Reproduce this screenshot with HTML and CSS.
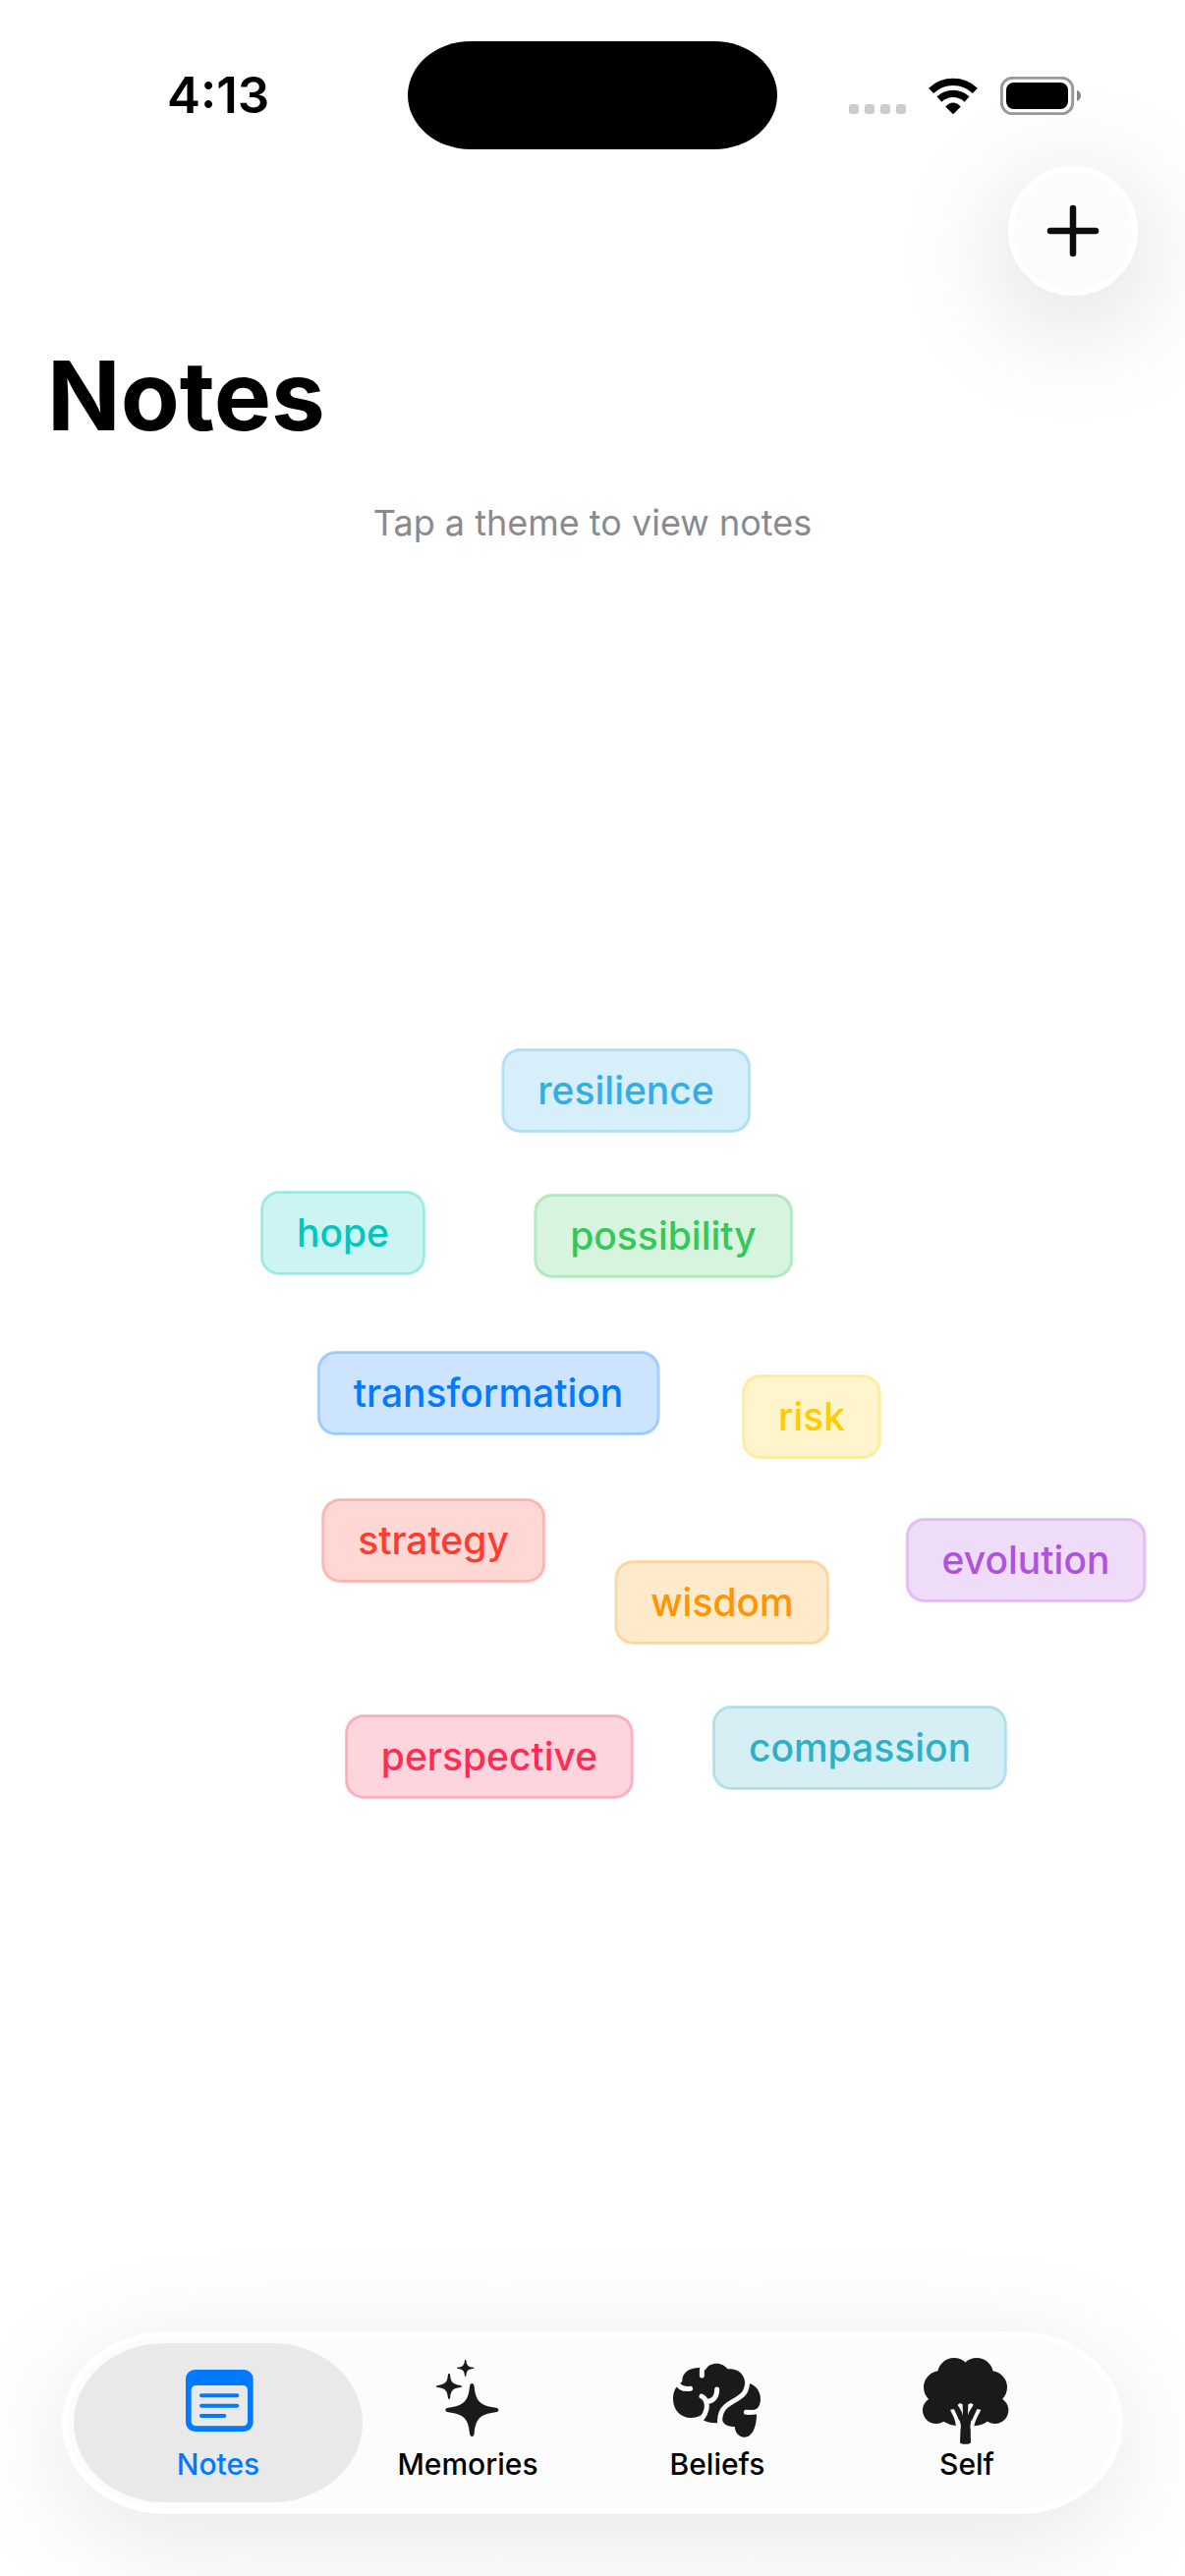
FILE: index.html
```html
<!DOCTYPE html>
<html lang="en">
<head>
  <meta charset="utf-8">
  <meta name="viewport" content="width=device-width, initial-scale=1">
  <title>Notes</title>
  <link rel="stylesheet" href="styles.css">
</head>
<body>
  <div class="screen">
    <div class="status">
      <time class="status-time">4:13</time>
      <div class="island"></div>
      <div class="status-icons">
        <div class="signal"><i></i><i></i><i></i><i></i></div>
        <svg class="wifi" viewBox="496 147 151 111" aria-hidden="true">
          <g fill="none" stroke="#000" stroke-width="22">
            <path d="M504 187A98 98 0 0 1 639 187"/>
            <path d="M529 213A62 62 0 0 1 614 213"/>
          </g>
          <path d="M548 236Q571 211 595 236L575 256Q571 260 568 256Z"/>
        </svg>
        <svg class="battery" viewBox="714 144 246 117" aria-hidden="true">
          <rect x="718" y="148" width="217" height="109" rx="33" fill="none" stroke="#999" stroke-width="9"/>
          <rect x="732" y="162" width="189" height="81" rx="23"/>
          <path d="M948 185Q960 190 960 202Q960 214 948 219Z" fill="#888"/>
        </svg>
      </div>
    </div>

    <header class="toolbar">
      <button class="add" type="button" aria-label="Add note">
        <svg viewBox="0 0 54 54" aria-hidden="true"><path d="M27 4V50M4 27H50" fill="none" stroke="#0c0c0c" stroke-width="6.5" stroke-linecap="round"/></svg>
      </button>
    </header>

    <h1 class="title">Notes</h1>
    <p class="hint">Tap a theme to view notes</p>

    <main class="cloud">
      <button type="button" class="theme cyan" style="--x:34px;--y:-354px">resilience</button>
      <button type="button" class="theme mint" style="--x:-254px;--y:-209px">hope</button>
      <button type="button" class="theme green" style="--x:72px;--y:-206px">possibility</button>
      <button type="button" class="theme blue" style="--x:-106px;--y:-46px">transformation</button>
      <button type="button" class="theme yellow" style="--x:223px;--y:-22px">risk</button>
      <button type="button" class="theme red" style="--x:-162px;--y:104px">strategy</button>
      <button type="button" class="theme orange" style="--x:132px;--y:167px">wisdom</button>
      <button type="button" class="theme purple" style="--x:441px;--y:124px">evolution</button>
      <button type="button" class="theme teal" style="--x:272px;--y:315px">compassion</button>
      <button type="button" class="theme pink" style="--x:-105px;--y:324px">perspective</button>
    </main>

    <nav class="tabs">
      <a class="tab active" href="#notes" aria-current="page">
        <svg viewBox="381 150 270 270" aria-hidden="true">
          <path fill-rule="evenodd" d="M445 186H595A28 28 0 0 1 623 214V347A28 28 0 0 1 595 375H445A28 28 0 0 1 417 347V214A28 28 0 0 1 445 186ZM448 234A14 14 0 0 0 434 248V344A14 14 0 0 0 448 358H592A14 14 0 0 0 606 344V248A14 14 0 0 0 592 234Z"/>
          <path d="M465 265H574M465 296H574M465 327H535" fill="none" stroke="currentColor" stroke-width="12" stroke-linecap="round"/>
        </svg>
        <span>Notes</span>
      </a>
      <a class="tab" href="#memories">
        <svg viewBox="153 150 270 270" aria-hidden="true">
          <defs><path id="spark" d="M0-81C4-81 6-78 7-72C11-28 24-13 72-7C78-6 81-4 81 0C81 4 78 6 72 7C24 13 11 28 7 72C6 78 4 81 0 81C-4 81-6 78-7 72C-11 28-24 13-72 7C-78 6-81 4-81 0C-81-4-78-6-72-7C-24-13-11-28-7-72C-6-78-4-81 0-81Z"/></defs>
          <use href="#spark" transform="translate(301 309)"/>
          <use href="#spark" transform="translate(231 237) scale(.48)"/>
          <use href="#spark" transform="translate(281 181) scale(.32)"/>
        </svg>
        <span>Memories</span>
      </a>
      <a class="tab" href="#beliefs">
        <svg viewBox="135 150 270 270" aria-hidden="true">
          <path d="M150 233C138 246 135 262 135 276C135 310 160 333 188 333C204 333 216 329 226 320V340C240 347 256 350 273 348L285 338C287 352 302 360 323 360C325 378 335 392 352 392C382 392 391 350 390 316L383 309C395 305 402 292 402 275C402 255 390 236 370 229L354 222C352 197 328 180 302 184C294 174 282 167 268 167C253 167 240 173 234 187L218 180C184 179 161 196 163 222Z"/>
          <g class="fold">
            <path d="M143 222C154 243 170 247 188 244"/>
            <path d="M227 172C221 188 222 196 223 204"/>
            <path d="M269 246C269 266 260 282 240 283"/>
            <path d="M222 267C236 274 238 287 238 298C238 315 232 326 216 343"/>
            <path d="M362 215C364 258 344 268 316 284C290 299 275 313 278 356"/>
            <path d="M400 311C384 318 370 317 358 316"/>
          </g>
        </svg>
        <span>Beliefs</span>
      </a>
      <a class="tab" href="#self">
        <svg viewBox="177 150 270 270" aria-hidden="true">
          <circle cx="273" cy="201" r="51"/><circle cx="342" cy="201" r="51"/>
          <circle cx="230" cy="240" r="50"/><circle cx="385" cy="240" r="50"/>
          <circle cx="218" cy="310" r="41"/><circle cx="398" cy="310" r="41"/>
          <path d="M225 220H390V330L373 345Q357 356 334 358L325 340C322 365 324 385 324 407Q324 413 308 413Q291 413 291 407C292 385 294 365 290 340L282 358Q260 356 242 345L215 325Z"/>
          <path class="gap" d="M261 309Q267 306 273 307L292 348Q294 356 293 366L284 380L278 357C279 342 269 325 261 309ZM355 309Q349 306 343 307L324 348Q322 356 323 366L332 380L334 357C337 342 347 325 355 309ZM284 293L291 288L299 292L300 326C296 310 290 305 284 293ZM332 293L325 288L316 292L315 326C319 310 326 305 332 293Z"/>
        </svg>
        <span>Self</span>
      </a>
    </nav>
  </div>
</body>
</html>
```
FILE: styles.css
```css
* {
  box-sizing: border-box;
}

body {
  margin: 0;
  background: #fff;
  color: #000;
  font-family: Inter, "Liberation Sans", sans-serif;
}

button {
  margin: 0;
  border: 0;
  font: inherit;
  cursor: pointer;
}

.screen {
  display: flex;
  flex-direction: column;
  min-height: 100vh;
  overflow: hidden;
}

/* Status bar */
.status {
  display: grid;
  grid-template-columns: 1fr 376px 1fr;
  align-items: center;
  padding-top: 42px;
}

.status-time {
  padding-left: 170px;
  font-size: 51px;
  font-weight: 600;
  line-height: 60px;
}

.island {
  height: 110px;
  border-radius: 64px / 55px;
  background: #000;
}

.status-icons {
  display: flex;
  align-items: center;
  justify-content: flex-end;
  gap: 23px;
  padding-right: 106px;
}

.signal {
  display: flex;
  align-self: flex-end;
  gap: 6px;
  padding-bottom: 1px;
}

.signal i {
  width: 10px;
  height: 10px;
  border-radius: 3px;
  background: #ccc;
}

.wifi {
  width: 50px;
  height: 37px;
}

.battery {
  width: 82px;
  height: 39px;
}

/* Toolbar and heading */
.toolbar {
  display: flex;
  justify-content: flex-end;
  padding: 17px 48px 0;
}

.add {
  display: grid;
  place-items: center;
  width: 132px;
  height: 132px;
  padding: 0;
  border: 6px solid #fff;
  border-radius: 50%;
  background: #fcfcfc;
  box-shadow: 0 24px 120px rgba(0, 0, 0, 0.17);
}

.add svg {
  width: 54px;
  height: 54px;
}

.title {
  margin: 42px 48px 0;
  font-size: 98px;
  font-weight: 700;
  line-height: 120px;
}

.hint {
  margin: 47px 48px 0;
  color: #8a8a8e;
  font-size: 36px;
  line-height: 44px;
  text-align: center;
}

/* Theme cloud: each theme sits at an offset from the centre */
.cloud {
  position: relative;
  flex: 1;
  min-height: 800px;
}

.theme {
  position: absolute;
  top: calc(50% + var(--y));
  left: calc(50% + var(--x));
  transform: translate(-50%, -50%);
  padding: 18px 36px;
  border-radius: 18px;
  background: rgb(var(--tint) / 0.2);
  box-shadow: 0 0 0 1px rgb(var(--tint) / 0.3), inset 0 0 0 2px rgb(var(--tint) / 0.25);
  color: rgb(var(--tint));
  font-size: 39px;
  font-weight: 500;
  line-height: 48px;
  white-space: nowrap;
}

.cyan { --tint: 50 173 230; }
.mint { --tint: 0 199 190; }
.green { --tint: 52 199 89; }
.blue { --tint: 0 122 255; }
.yellow { --tint: 255 204 0; }
.red { --tint: 255 59 48; }
.orange { --tint: 255 149 0; }
.purple { --tint: 175 82 222; }
.teal { --tint: 48 176 199; }
.pink { --tint: 255 45 85; }

/* Tab bar */
.tabs {
  display: grid;
  grid-template-columns: repeat(4, 1fr);
  margin: 0 63px 63px;
  padding: 6px 26px;
  border: 6px solid #fff;
  border-radius: 106px / 93px;
  background: #fcfcfc;
  box-shadow: 0 24px 120px rgba(0, 0, 0, 0.1);
}

.tab {
  position: relative;
  display: flex;
  flex-direction: column;
  align-items: center;
  padding: 15px 0 21px;
  color: #000;
  font-size: 30px;
  font-weight: 500;
  line-height: 36px;
  text-decoration: none;
}

.tab svg {
  position: relative;
  width: 90px;
  height: 90px;
  fill: #1a1a1a;
}

.tab span {
  position: relative;
}

.tab.active {
  color: #007aff;
}

.tab.active svg {
  fill: currentColor;
}

/* The highlight is wider than its tab */
.tab.active::before {
  content: "";
  position: absolute;
  inset: 0 -20px;
  border-radius: 92px / 81px;
  background: #e9e9e9;
}

.fold {
  fill: none;
  stroke: #fcfcfc;
  stroke-width: 15px;
  stroke-linecap: round;
}

.gap {
  fill: #fcfcfc;
}
```
